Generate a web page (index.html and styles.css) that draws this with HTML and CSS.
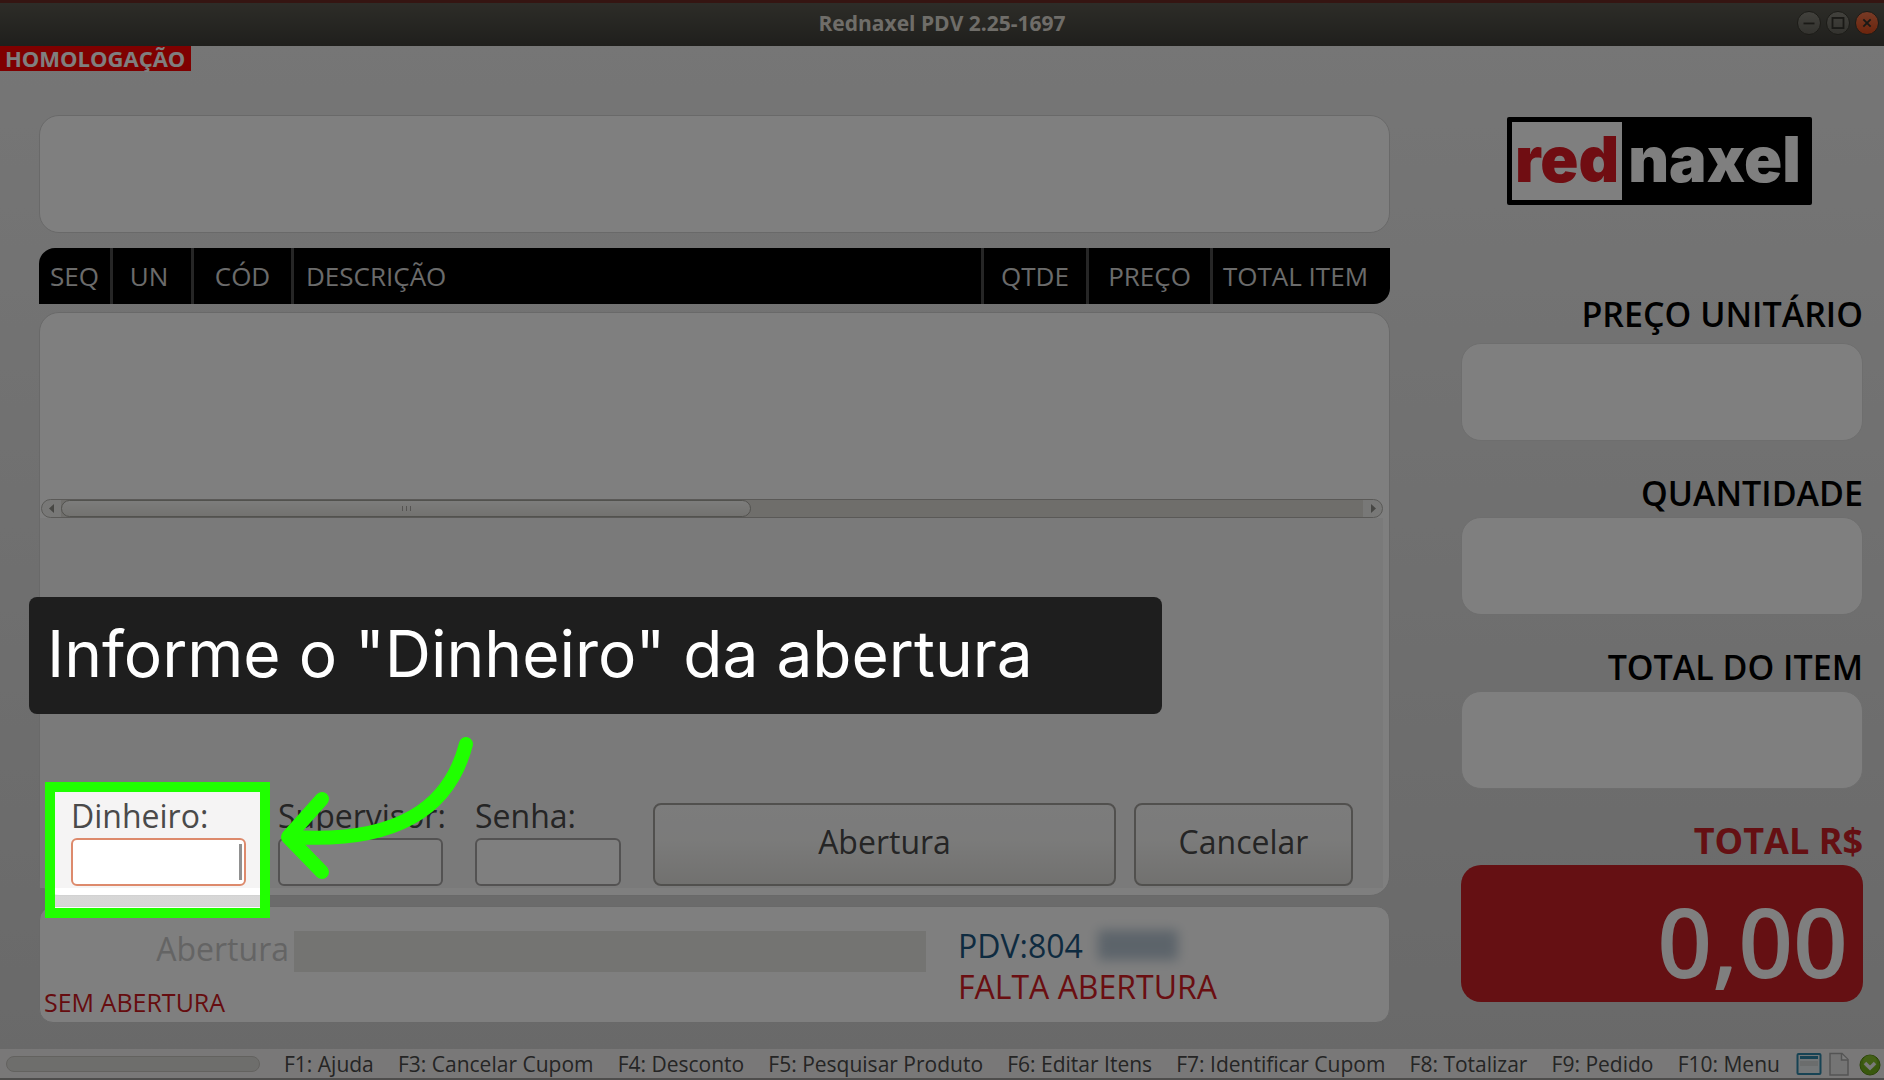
FILE: index.html
```html
<!DOCTYPE html>
<html lang="pt-BR">
<head>
<meta charset="utf-8">
<title>Rednaxel PDV 2.25-1697</title>
<link rel="stylesheet" href="styles.css">
</head>
<body>
<div class="window">
  <header class="titlebar">
    <h1 class="titlebar-text">Rednaxel PDV 2.25-1697</h1>
    <div class="titlebar-controls">
      <button class="win-btn" type="button" aria-label="Minimizar"><svg viewBox="0 0 24 24"><path d="M6 12.500h12"/></svg></button>
      <button class="win-btn" type="button" aria-label="Maximizar"><svg viewBox="0 0 24 24"><rect x="6" y="6.500" width="12" height="11"/></svg></button>
      <button class="win-btn win-btn-close" type="button" aria-label="Fechar"><svg viewBox="0 0 24 24"><path d="M8 8l8 8M16 8l-8 8"/></svg></button>
    </div>
  </header>
  <div class="body">
    <strong class="env-tag">HOMOLOGAÇÃO</strong>
    <main class="main">
      <section class="sale">
        <div class="panel display"></div>
        <table class="items-head">
          <thead>
            <tr>
              <th class="col-seq">SEQ</th>
              <th class="col-un">UN</th>
              <th class="col-cod">CÓD</th>
              <th class="col-desc">DESCRIÇÃO</th>
              <th class="col-qtde">QTDE</th>
              <th class="col-preco">PREÇO</th>
              <th class="col-total">TOTAL ITEM</th>
            </tr>
          </thead>
        </table>
        <div class="panel items">
          <div class="items-list"></div>
          <div class="scrollbar">
            <svg class="scroll-arrow" viewBox="0 0 19 17"><path d="M12 4v9L7 8.500z"/></svg>
            <div class="scroll-track"><div class="scroll-thumb"><i></i><i></i><i></i></div></div>
            <svg class="scroll-arrow" viewBox="0 0 19 17"><path d="M8 4v9l5-4.500z"/></svg>
          </div>
          <form class="opening">
            <div class="field field-money">
              <label for="dinheiro">Dinheiro:</label>
              <input id="dinheiro" type="text">
              <span class="caret"></span>
              <div class="spotlight"></div>
              <svg class="arrow" viewBox="0 0 200 150"><path d="M189 13C173 75 123 113 15 106"/><path d="M45 68L11 106L45 141"/></svg>
              <p class="callout">Informe o "Dinheiro" da abertura</p>
            </div>
            <div class="field field-supervisor">
              <label for="supervisor">Supervisor:</label>
              <input id="supervisor" type="text">
            </div>
            <div class="field field-senha">
              <label for="senha">Senha:</label>
              <input id="senha" type="password">
            </div>
            <button class="btn btn-open" type="button">Abertura</button>
            <button class="btn btn-cancel" type="button">Cancelar</button>
          </form>
        </div>
        <div class="panel status">
          <div class="operation">
            <div class="operation-row">
              <span class="operation-name">Abertura</span>
              <div class="operation-value"></div>
            </div>
            <p class="operation-alert">SEM ABERTURA</p>
          </div>
          <div class="terminal">
            <p class="terminal-id">PDV:804<span class="redacted"></span></p>
            <p class="terminal-alert">FALTA ABERTURA</p>
          </div>
        </div>
      </section>
      <aside class="totals">
        <div class="logo"><span class="logo-red">red</span><span class="logo-naxel">naxel</span></div>
        <div class="amount amount-unit"><h2>PREÇO UNITÁRIO</h2><div class="amount-box"></div></div>
        <div class="amount"><h2>QUANTIDADE</h2><div class="amount-box"></div></div>
        <div class="amount"><h2>TOTAL DO ITEM</h2><div class="amount-box"></div></div>
        <div class="amount amount-grand"><h2>TOTAL R$</h2><div class="amount-box">0,00</div></div>
      </aside>
    </main>
  </div>
  <footer class="statusbar">
    <div class="progress"></div>
    <nav class="shortcuts">
      <button type="button">F1: Ajuda</button>
      <button type="button">F3: Cancelar Cupom</button>
      <button type="button">F4: Desconto</button>
      <button type="button">F5: Pesquisar Produto</button>
      <button type="button">F6: Editar Itens</button>
      <button type="button">F7: Identificar Cupom</button>
      <button type="button">F8: Totalizar</button>
      <button type="button">F9: Pedido</button>
      <button type="button">F10: Menu</button>
    </nav>
    <div class="tray">
      <svg class="tray-icon" viewBox="0 0 26 24"><rect x="1.500" y="2" width="23" height="20" rx="1" fill="#e9eef0" stroke="#2f86a8" stroke-width="2"/><path d="M4 5.500h18" stroke="#2f86a8" stroke-width="3"/><path d="M4 9h18v5H4z" fill="#d6dadb"/></svg>
      <svg class="tray-icon" viewBox="0 0 26 24"><path d="M4 1.500h12l6 6V23H4z" fill="#e9e9e9" stroke="#a9a9a9" stroke-width="1.500"/><path d="M15.500 2v6H22" fill="#f8f8f8" stroke="#a9a9a9" stroke-width="1.500"/></svg>
      <svg class="tray-icon tray-ok" viewBox="0 0 22 24"><circle cx="11" cy="13" r="10" fill="#73b01c" stroke="#578a10"/><circle cx="11" cy="10" r="7" fill="#9ad03c" opacity=".5"/><path d="M6 11l5 5 5-5" fill="none" stroke="#f4f4f4" stroke-width="3.500"/></svg>
    </div>
  </footer>
</div>
</body>
</html>
```
FILE: styles.css
```css
* { box-sizing: border-box; }

body {
  margin: 0;
  font-family: "Open Sans", "Noto Sans", sans-serif;
  color: #4a4a4a;
}

h1, h2, p { margin: 0; }

button, input { font: inherit; color: inherit; }

.window {
  display: flex;
  flex-direction: column;
  min-height: 100vh;
  overflow: hidden;
  position: relative;
}

/* Title bar */
.titlebar {
  display: grid;
  grid-template-columns: 1fr auto 1fr;
  align-items: center;
  height: 46px;
  padding: 0 5px 3px;
  border-top: 3px solid #6b2a24;
  background: linear-gradient(#5b5a51, #3f3e39);
}

.titlebar-text {
  grid-column: 2;
  font-size: 21px;
  line-height: 24px;
  font-weight: 700;
  color: #dfdbd2;
}

.titlebar-controls {
  display: flex;
  justify-content: flex-end;
  gap: 5px;
}

.win-btn {
  width: 24px;
  height: 24px;
  padding: 0;
  border: 1px solid #38372f;
  border-radius: 50%;
  background: linear-gradient(#85837a, #66655d);
}

.win-btn svg {
  display: block;
  width: 22px;
  height: 22px;
  fill: none;
  stroke: #34332d;
  stroke-width: 2;
}

.win-btn-close { background: linear-gradient(#f0764c, #d8491a); }

/* Content */
.body {
  flex: 1;
  display: flex;
  flex-direction: column;
  background: linear-gradient(#ececec, #d3d3d3);
}

.env-tag {
  align-self: flex-start;
  width: 191px;
  padding-left: 5px;
  font-size: 22px;
  line-height: 25px;
  color: #fff;
  background: #f00;
}

.main {
  flex: 1;
  display: grid;
  grid-template-columns: minmax(0, 1fr) 402px;
  column-gap: 71px;
  padding: 44px 21px 26px 39px;
}

.sale {
  display: flex;
  flex-direction: column;
}

.panel {
  background: #fff;
  border: 1px solid #d2d2d2;
  border-radius: 20px;
}

.display {
  height: 118px;
  margin-bottom: 15px;
}

.items-head {
  width: 100%;
  height: 56px;
  margin-bottom: 8px;
  table-layout: fixed;
  border-spacing: 0;
  background: #000;
  border-radius: 16px 0 16px 0;
}

.items-head th {
  padding: 0;
  font-size: 26px;
  line-height: 32px;
  font-weight: 400;
  color: #d6d6d6;
  border-right: 3px solid #4c4c4c;
}

.items-head th:last-child { border-right: 0; }
.col-seq { width: 74px; }
.col-un { width: 81px; }
.items-head .col-un { padding-right: 6px; }
.col-cod { width: 100px; }
.items-head .col-desc { padding-left: 12px; text-align: left; }
.col-qtde { width: 105px; }
.col-preco { width: 124px; }
.col-total { width: 177px; }
.items-head .col-total { padding-right: 12px; }

.items {
  flex: 1;
  display: flex;
  flex-direction: column;
  margin-bottom: 10px;
  padding: 0 6px 7px 0;
}

.items-list { height: 186px; }

.scrollbar {
  display: flex;
  height: 19px;
  margin-left: 1px;
  border: 1px solid #b4b3ae;
  border-radius: 10px;
  background: #f0f0ee;
}

.scroll-arrow {
  width: 19px;
  height: 17px;
  fill: #8f8e89;
}

.scroll-track {
  flex: 1;
  background: #dedcd7;
}

.scroll-thumb {
  display: flex;
  align-items: center;
  justify-content: center;
  gap: 3px;
  width: 53%;
  height: 17px;
  border: 1px solid #a5a49d;
  border-radius: 9px;
  background: linear-gradient(#fafaf8, #e6e5e0);
}

.scroll-thumb i {
  width: 1px;
  height: 5px;
  background: #aaa9a4;
}

/* Cash opening form */
.opening {
  flex: 1;
  display: flex;
  align-items: flex-end;
  padding: 0 30px 2px 31px;
  background: #f5f4f4;
}

.field {
  display: flex;
  flex-direction: column;
  margin-right: 32px;
}

.field label {
  font-size: 32px;
  line-height: 44px;
}

.field input {
  width: 100%;
  height: 48px;
  padding: 0 8px;
  border: 2px solid #a6a4a4;
  border-radius: 6px;
  background: #fff;
}

.field-money { position: relative; width: 175px; }
.field-supervisor { width: 165px; }
.field-senha { width: 146px; }
.field-money input { border-color: #dd8a6c; }

.btn {
  height: 83px;
  padding: 0 8px 6px;
  border: 2px solid #a3a19d;
  border-radius: 8px;
  font-size: 32px;
  line-height: 40px;
  background: linear-gradient(#f8f8f8, #f6f6f5 45%, #e3e2df);
}

.btn-open { flex: 1; margin-right: 18px; }
.btn-cancel { width: 219px; }

/* Tutorial overlay */
.caret {
  position: absolute;
  right: 4px;
  bottom: 6px;
  width: 3px;
  height: 36px;
  background: #909090;
}

.spotlight {
  position: absolute;
  z-index: 1;
  left: -26px;
  right: -24px;
  top: -12px;
  bottom: -32px;
  border: 10px solid #20ff00;
  box-shadow: 0 0 0 4000px rgba(0, 0, 0, .5);
  pointer-events: none;
}

.arrow {
  position: absolute;
  z-index: 2;
  left: 206px;
  bottom: 5px;
  width: 200px;
  height: 150px;
  fill: none;
  stroke: #20ff00;
  stroke-width: 14;
  stroke-linecap: round;
  stroke-linejoin: round;
}

.callout {
  position: absolute;
  z-index: 2;
  left: -42px;
  bottom: 172px;
  width: 1133px;
  padding: 14px 18px 18px;
  border-radius: 8px;
  font-family: Inter, sans-serif;
  font-size: 64px;
  line-height: 85px;
  white-space: nowrap;
  color: #fff;
  background: #1e1e1e;
}

/* Register status */
.status {
  display: flex;
  height: 117px;
  border-radius: 14px;
}

.operation { flex: 1; padding: 24px 0 0 4px; }

.operation-row {
  display: flex;
  align-items: flex-start;
  gap: 5px;
}

.operation-name {
  width: 245px;
  font-size: 32px;
  line-height: 36px;
  text-align: right;
  color: #c9c9c9;
}

.operation-value {
  flex: 1;
  height: 41px;
  background: #e8e8e5;
}

.operation-alert {
  padding-top: 14px;
  font-size: 25px;
  line-height: 32px;
  color: #cc1820;
}

.terminal {
  width: 463px;
  padding: 18px 0 0 32px;
  font-size: 32px;
  line-height: 41px;
}

.terminal-id {
  display: flex;
  gap: 15px;
  color: #1d5681;
}

.redacted {
  width: 80px;
  height: 30px;
  margin-top: 5px;
  background: #b9c8d5;
  filter: blur(6px);
}

.terminal-alert { color: #d41c24; }

/* Totals column */
.logo {
  display: flex;
  width: 305px;
  height: 88px;
  margin: 2px 0 87px 46px;
  padding: 5px;
  border-radius: 2px;
  background: #000;
  font-family: Inter, sans-serif;
  font-size: 63px;
  line-height: 74px;
  font-weight: 900;
}

.logo-red {
  width: 110px;
  text-align: center;
  color: #e01b24;
  background: #fff;
}

.logo-naxel { flex: 1; text-align: center; color: #fff; }

.amount { margin-bottom: 28px; }

.amount h2 {
  font-size: 34px;
  line-height: 48px;
  font-weight: 600;
  text-align: right;
  color: #000;
}

.amount-unit h2 { line-height: 44px; padding-bottom: 7px; }

.amount-box {
  height: 98px;
  border: 1px solid #dcdcdc;
  border-radius: 20px;
  background: #fff;
}

.amount-grand { margin-bottom: 0; }
.amount-grand h2 { font-size: 36px; font-weight: 700; color: #ca2026; }

.amount-grand .amount-box {
  height: 137px;
  padding: 7px 15px 0;
  border: 0;
  font-size: 96px;
  line-height: 137px;
  font-weight: 600;
  text-align: right;
  color: #fff;
  background: #ca2026;
}

/* Status bar */
.statusbar {
  display: flex;
  align-items: center;
  height: 31px;
  padding: 0 3px 0 6px;
  border-bottom: 2px solid #9c9a98;
  background: #f2f1f0;
}

.progress {
  width: 254px;
  height: 16px;
  margin-right: 24px;
  border: 1px solid #c6c4bf;
  border-radius: 8px;
  background: #dddcd8;
}

.shortcuts {
  flex: 1;
  display: flex;
  justify-content: space-between;
}

.shortcuts button {
  padding: 0;
  border: 0;
  background: none;
  font-size: 21px;
  line-height: 28px;
  white-space: nowrap;
}

.tray {
  display: flex;
  align-items: center;
  gap: 4px;
  margin-left: 16px;
}

.tray-icon { width: 26px; height: 24px; }
.tray-ok { width: 22px; margin-left: 3px; }
```
